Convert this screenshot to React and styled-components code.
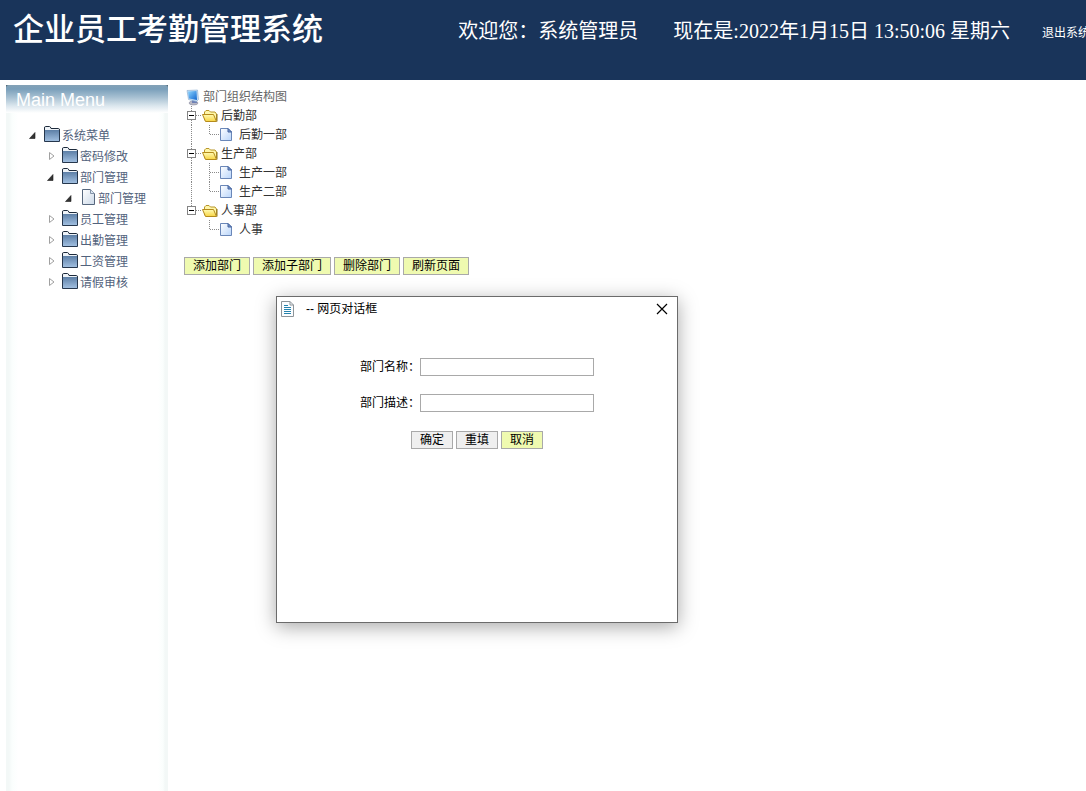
import React from 'react'
import styled, { createGlobalStyle } from 'styled-components';

const GlobalStyle = createGlobalStyle`
    * {
        box-sizing:border-box;
    }
    body {
        margin:0;
        overflow:hidden;
        background:#ffffff;
        font-family:"Liberation Sans", "Noto Sans CJK SC", sans-serif;
        font-size:12px;
    }
    a {
        color:inherit;
        text-decoration:none;
    }
    ul {
        margin:0;
        padding:0;
        list-style:none;
    }
`

const Header = styled.header`
    display:flex;
    align-items:center;
    height:80px;
    padding:0 0 20px 13px;
    overflow:hidden;
    white-space:nowrap;
    color:#ffffff;
    background:#19345a;
    font-family:"Liberation Serif", "Noto Sans CJK SC", serif;
`
const Title = styled.h1`
    margin:0 auto 0 0;
    font-size:31px;
    line-height:36px;
    font-weight:500;
`
const HeaderInfo = styled.span`
    margin-right:${({ $gap }) => $gap}px;
    padding-top:2px;
    font-size:20px;
    line-height:24px;
`
const Logout = styled.a`
    width:44px;
    padding-top:6px;
    overflow:hidden;
    font-size:12px;
    line-height:16px;
`

const Layout = styled.div`
    display:flex;
    min-height:calc(100vh - 80px);
`
const Sidebar = styled.nav`
    width:162px;
    margin:5px 0 0 6px;
    background:linear-gradient(to right, #f3f8f7 0, #f3f8f7 3px, #fafefd 6px, #ffffff 12px, #ffffff 152px, #fafefd 157px, #f3f8f7 159px, #f3f8f7 100%);
`
const SidebarCap = styled.div`
    background:#4f6775;
`
const SidebarTitle = styled.h2`
    height:28px;
    margin:0;
    padding:4px 10px 0;
    border-radius:3px 3px 0 0;
    color:#ffffff;
    background:linear-gradient(#83a1b6 0, #7a9fba 4px, #a5bfd1 12px, #dce7ee 21px, #ffffff 28px);
    font-size:18px;
    line-height:22px;
    font-weight:400;
`
const Menu = styled.ul`
    && {
        padding:13px 0 0 22px;
    }
`
const MenuRow = styled.li`
    display:flex;
    align-items:flex-start;
    height:21px;
    padding-left:${({ $level }) => $level * 18}px;
    color:#52627c;
`
const Toggle = styled.button`
    display:flex;
    width:16px;
    height:17px;
    padding:1px 0 0;
    border:0;
    background:none;
`
const MenuLink = styled.a`
    display:flex;
    align-items:flex-start;
    gap:2px;
    line-height:21px;
`

const Main = styled.main`
    flex:1;
    padding:7px 0 0 15px;
`
const TreeRow = styled.li`
    display:flex;
    align-items:center;
    height:19px;
    color:${({ $root }) => $root ? '#666666' : '#333333'};

    svg {
        flex:none;
    }
    a {
        margin-left:2px;
        line-height:20px;
    }
`
const Toolbar = styled.div`
    display:flex;
    gap:3px;
    padding:18px 0 0 1px;
`
const Button = styled.button`
    height:18px;
    padding:0 8px;
    border:1px solid #a9a9a9;
    color:#000000;
    background:${({ $plain }) => $plain ? '#efefef' : '#effab0'};
    font-family:inherit;
    font-size:12px;
    line-height:16px;
`

const Dialog = styled.section`
    position:absolute;
    top:296px;
    left:276px;
    width:402px;
    height:327px;
    border:1px solid #6b6b6b;
    background:#ffffff;
    box-shadow:0 4px 18px rgba(0,0,0,0.34);
`
const DialogBar = styled.div`
    display:flex;
    align-items:center;
    height:24px;
    padding:0 9px 0 4px;
`
const DialogTitle = styled.h3`
    margin:0 auto 0 11px;
    font-size:12px;
    line-height:16px;
    font-weight:400;
`
const CloseButton = styled.button`
    display:flex;
    padding:0;
    border:0;
    background:none;
`
const Form = styled.form`
    display:flex;
    flex-direction:column;
    align-items:center;
    gap:18px;
    padding-top:37px;
`
const Field = styled.div`
    display:flex;
    align-items:center;
    height:18px;

    label {
        width:60px;
        line-height:20px;
    }
    input {
        width:174px;
        height:18px;
        padding:0 2px;
        border:1px solid #a9a9a9;
        background:#ffffff;
        font-size:12px;
    }
`
const Actions = styled.div`
    display:flex;
    gap:3px;
    padding-top:1px;
`

const menu = [
    { name: '系统菜单', level: 0, open: true },
    { name: '密码修改', level: 1 },
    { name: '部门管理', level: 1, open: true },
    { name: '部门管理', level: 2, open: true, leaf: true },
    { name: '员工管理', level: 1 },
    { name: '出勤管理', level: 1 },
    { name: '工资管理', level: 1 },
    { name: '请假审核', level: 1 },
];

const departments = [
    { name: '后勤部', children: ['后勤一部'] },
    { name: '生产部', children: ['生产一部', '生产二部'] },
    { name: '人事部', children: ['人事'] },
];

const Arrow = ({ open }) => (
    <svg width="16" height="16" viewBox="0 0 16 16">
        {open
            ? <path d="M7 5.500v6H1.500z" fill="#333333" stroke="#1c1c1c" strokeWidth="0.6" />
            : <path d="M3.500 4.500v7l4.500-3.500z" fill="#ffffff" stroke="#a0a0a0" />}
    </svg>
)

const MenuFolder = () => (
    <svg width="16" height="16" viewBox="0 0 16 16">
        <defs>
            <linearGradient id="menuFolder" x1="0" y1="0" x2="0" y2="1">
                <stop offset="0" stopColor="#5d7fa6" />
                <stop offset="1" stopColor="#a3c1e2" />
            </linearGradient>
        </defs>
        <path d="M.5 14V2Q.5 .5 1.500 .5H5.500Q6.500 .5 7 2.500H14.500Q15.500 2.500 15.500 4V6" fill="#eef3f8" stroke="#1d2a3b" />
        <rect x=".5" y="4" width="15" height="11.500" rx=".5" fill="url(#menuFolder)" />
        <path d="M.5 4V15.500H15.500V4" fill="none" stroke="#26374d" />
    </svg>
)

const MenuFile = () => (
    <svg width="16" height="16" viewBox="0 0 16 16">
        <defs>
            <linearGradient id="menuFile" x1="0" y1="0" x2="1" y2="1">
                <stop offset="0" stopColor="#ffffff" />
                <stop offset="1" stopColor="#ccd9e8" />
            </linearGradient>
        </defs>
        <path d="M2.500.5H10.500L14.500 4.500V15.500H2.500z" fill="url(#menuFile)" stroke="#56677d" />
        <path d="M10.500 .5V4.500H14.500" fill="#dce7f2" stroke="#8293a8" />
    </svg>
)

const Computer = () => (
    <svg width="18" height="19" viewBox="0 0 18 19">
        <defs>
            <linearGradient id="screen" x1="0" y1="0" x2="1" y2="1">
                <stop offset="0" stopColor="#8bd4ff" />
                <stop offset="1" stopColor="#1266cf" />
            </linearGradient>
        </defs>
        <ellipse cx="10.500" cy="16" rx="4.500" ry="2" fill="#b8b8c4" stroke="#8f91a4" strokeWidth=".6" />
        <path d="M9 12h4.500l.5 4H9z" fill="#6f80b4" />
        <path d="M4 3.500L14.500 3L15.500 12.500L13.500 14.500L5.500 12.500z" fill="#c4dcf3" stroke="#87a9cf" strokeWidth=".6" />
        <path d="M5 4.500L13.500 4L14 13L6 11.500z" fill="url(#screen)" />
    </svg>
)

// vertical line that carries the outer branch past its children
const Guide = ({ hidden }) => (
    <svg width="18" height="19" viewBox="0 0 18 19">
        {!hidden && <path d="M8.500 0V19" stroke="#8a8a8a" strokeDasharray="1 1" />}
    </svg>
)

const Minus = ({ last }) => (
    <svg width="18" height="19" viewBox="0 0 18 19">
        <path d={last ? 'M8.500 0V9M13 9.500H18' : 'M8.500 0V19M13 9.500H18'} stroke="#8a8a8a" strokeDasharray="1 1" />
        <rect x="4.500" y="5.500" width="8" height="8" fill="#ffffff" stroke="#848484" />
        <path d="M6 9.500H11" stroke="#000000" />
    </svg>
)

const Corner = ({ last }) => (
    <svg width="18" height="19" viewBox="0 0 18 19">
        <path d={last ? 'M8.500 0V10M9 9.500H18' : 'M8.500 0V19M9 9.500H18'} fill="none" stroke="#8a8a8a" strokeDasharray="1 1" />
    </svg>
)

const TreeFolder = () => (
    <svg width="18" height="19" viewBox="0 0 18 19">
        <defs>
            <linearGradient id="treeFolder" x1="0" y1="0" x2="0" y2="1">
                <stop offset="0" stopColor="#fffbb4" />
                <stop offset="1" stopColor="#f7d443" />
            </linearGradient>
        </defs>
        <path d="M3.500 14V6L5 4.500H8L9.500 6H14L15.500 8V14z" fill="#fff6a8" stroke="#b8962b" strokeLinejoin="round" />
        <path d="M1.500 8.500H12.500L15.500 15.500H4.500z" fill="url(#treeFolder)" stroke="#b58b1c" strokeLinejoin="round" />
        <path d="M16 8V15.500" stroke="#8f741c" />
    </svg>
)

const TreeFile = () => (
    <svg width="18" height="19" viewBox="0 0 18 19">
        <defs>
            <linearGradient id="treeFile" x1="0" y1="0" x2="1" y2="1">
                <stop offset="0" stopColor="#ffffff" />
                <stop offset="1" stopColor="#b9d5fa" />
            </linearGradient>
        </defs>
        <path d="M1.500 3.500H9L12.500 7V15.500H1.500z" fill="url(#treeFile)" stroke="#6a87b8" />
        <path d="M9 3.500V7H12.500z" fill="#7e9fd2" stroke="#43619c" />
    </svg>
)

const PageIcon = () => (
    <svg width="14" height="16" viewBox="0 0 14 16">
        <path d="M.5.5H9L12.500 4V15.500H.5z" fill="#fbfdff" stroke="#8d9499" />
        <path d="M9 .5V4H12.500" fill="none" stroke="#8d9499" />
        <path d="M3 4.500H7M3 6.500H10M3 8.500H10M3 10.500H10M3 12.500H10" stroke="#2583ad" />
    </svg>
)

const CloseIcon = () => (
    <svg width="12" height="12" viewBox="0 0 12 12">
        <path d="M1 1L11 11M11 1L1 11" stroke="#000000" strokeWidth="1.200" />
    </svg>
)

export default function App() {
    return (
        <>
            <GlobalStyle />
            <Header>
                <Title>企业员工考勤管理系统</Title>
                <HeaderInfo $gap={35}>欢迎您：系统管理员</HeaderInfo>
                <HeaderInfo $gap={32}>现在是:2022年1月15日 13:50:06 星期六</HeaderInfo>
                <Logout href="#">退出系统</Logout>
            </Header>
            <Layout>
                <Sidebar>
                    <SidebarCap>
                        <SidebarTitle>Main Menu</SidebarTitle>
                    </SidebarCap>
                    <Menu>
                        {menu.map((item, i) => (
                            <MenuRow key={i} $level={item.level}>
                                <Toggle type="button" aria-label={item.name}><Arrow open={item.open} /></Toggle>
                                <MenuLink href="#">{item.leaf ? <MenuFile /> : <MenuFolder />}{item.name}</MenuLink>
                            </MenuRow>
                        ))}
                    </Menu>
                </Sidebar>
                <Main>
                    <ul>
                        <TreeRow $root><Computer /><a href="#">部门组织结构图</a></TreeRow>
                        {departments.map((dept, i) => {
                            const lastDept = i === departments.length - 1;
                            return (
                                <React.Fragment key={dept.name}>
                                    <TreeRow><Minus last={lastDept} /><TreeFolder /><a href="#">{dept.name}</a></TreeRow>
                                    {dept.children.map((child, j) => (
                                        <TreeRow key={child}>
                                            <Guide hidden={lastDept} />
                                            <Corner last={j === dept.children.length - 1} />
                                            <TreeFile />
                                            <a href="#">{child}</a>
                                        </TreeRow>
                                    ))}
                                </React.Fragment>
                            );
                        })}
                    </ul>
                    <Toolbar>
                        <Button type="button">添加部门</Button>
                        <Button type="button">添加子部门</Button>
                        <Button type="button">删除部门</Button>
                        <Button type="button">刷新页面</Button>
                    </Toolbar>
                </Main>
            </Layout>
            <Dialog role="dialog" aria-labelledby="dialog-title">
                <DialogBar>
                    <PageIcon />
                    <DialogTitle id="dialog-title">-- 网页对话框</DialogTitle>
                    <CloseButton type="button" aria-label="关闭"><CloseIcon /></CloseButton>
                </DialogBar>
                <Form>
                    <Field>
                        <label htmlFor="dept-name">部门名称：</label>
                        <input id="dept-name" type="text" />
                    </Field>
                    <Field>
                        <label htmlFor="dept-desc">部门描述：</label>
                        <input id="dept-desc" type="text" />
                    </Field>
                    <Actions>
                        <Button type="button" $plain>确定</Button>
                        <Button type="reset" $plain>重填</Button>
                        <Button type="button">取消</Button>
                    </Actions>
                </Form>
            </Dialog>
        </>
    );
}
